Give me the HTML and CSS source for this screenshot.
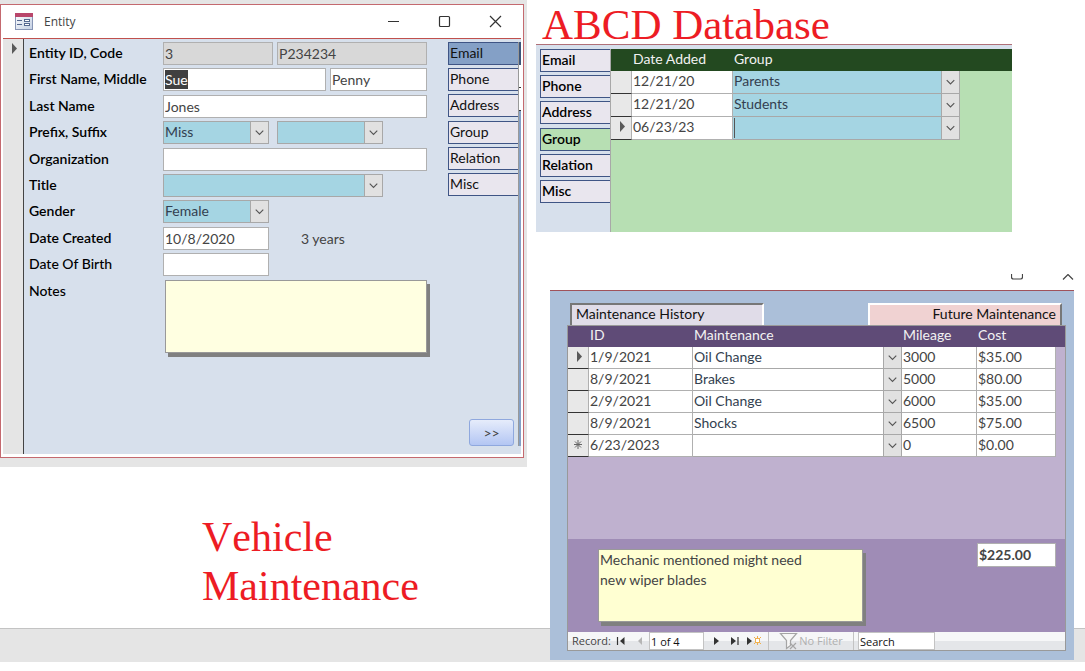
FILE: index.html
```
<!DOCTYPE html>
<html lang="en">
<head>
  <meta charset="UTF-8">
  <meta name="viewport" content="width=device-width, initial-scale=1.0">
  <title>ABCD Database</title>
  <link rel="stylesheet" href="styles.css">
</head>
<body>
  <svg width="0" height="0" class="defs" aria-hidden="true">
    <symbol id="chevron" viewBox="0 0 18 22"><path d="M5 9l4 4 4-4" fill="none" stroke="#555" stroke-width="1.2"/></symbol>
    <symbol id="current" viewBox="0 0 20 21"><path d="M9 4l5 5.500-5 5.500z" fill="#5a5a5a"/></symbol>
  </svg>

  <div class="page">
    <div class="strip"></div>

    <div class="left">
      <div class="workspace">
        <div class="window">
          <div class="titlebar">
            <svg width="18" height="17" viewBox="0 0 18 17" aria-hidden="true">
              <defs>
                <linearGradient id="sheet" x1="0" y1="0" x2="1" y2="1"><stop offset="0" stop-color="#fff"/><stop offset="1" stop-color="#c3cfe3"/></linearGradient>
              </defs>
              <rect x="0.500" y="0.500" width="17" height="16" fill="url(#sheet)" stroke="#8795b5"/>
              <rect x="0" y="0" width="18" height="4" fill="#b9466b"/>
              <path d="M2 7.500h5M2 11.500h5" stroke="#55688f"/>
              <rect x="9.500" y="6.500" width="5" height="2" fill="#fff" stroke="#55688f"/>
              <rect x="9.500" y="10.500" width="5" height="2" fill="#fff" stroke="#55688f"/>
            </svg>
            <span class="title">Entity</span>
            <button class="win-btn" aria-label="Minimize"><svg width="13" height="13"><path d="M1 6.500h11" stroke="#333"/></svg></button>
            <button class="win-btn" aria-label="Maximize"><svg width="13" height="13"><rect x="1.500" y="1.500" width="10" height="10" rx="1" fill="none" stroke="#333" stroke-width="1.200"/></svg></button>
            <button class="win-btn" aria-label="Close"><svg width="13" height="13"><path d="M1 1l11 11M12 1L1 12" stroke="#333" stroke-width="1.200"/></svg></button>
          </div>

          <div class="form-body">
            <div class="selector"><svg width="20" height="21"><use href="#current"/></svg></div>
            <form class="entity">
              <div class="fields">
                <div class="rows">
                  <div class="row">
                    <label for="entityId">Entity ID, Code</label>
                    <input class="box locked w-id" id="entityId" value="3" readonly>
                    <input class="box locked grow" value="P234234" aria-label="Code" readonly>
                  </div>
                  <div class="row">
                    <label for="firstName">First Name, Middle</label>
                    <div class="box w-first" id="firstName" role="textbox" contenteditable="true"><mark>Sue</mark></div>
                    <input class="box grow" value="Penny" aria-label="Middle">
                  </div>
                  <div class="row">
                    <label for="lastName">Last Name</label>
                    <input class="box grow" id="lastName" value="Jones">
                  </div>
                  <div class="row">
                    <label for="prefix">Prefix, Suffix</label>
                    <span class="combo w-short"><select id="prefix"><option>Miss</option></select><svg><use href="#chevron"/></svg></span>
                    <span class="combo w-short suffix"><select aria-label="Suffix"><option></option></select><svg><use href="#chevron"/></svg></span>
                  </div>
                  <div class="row">
                    <label for="org">Organization</label>
                    <input class="box grow" id="org">
                  </div>
                  <div class="row">
                    <label for="jobTitle">Title</label>
                    <span class="combo w-title"><select id="jobTitle"><option></option></select><svg><use href="#chevron"/></svg></span>
                  </div>
                  <div class="row">
                    <label for="gender">Gender</label>
                    <span class="combo w-short"><select id="gender"><option>Female</option></select><svg><use href="#chevron"/></svg></span>
                  </div>
                  <div class="row">
                    <label for="created">Date Created</label>
                    <input class="box w-short" id="created" value="10/8/2020">
                    <span class="age">3 years</span>
                  </div>
                  <div class="row">
                    <label for="birth" class="light">Date Of Birth</label>
                    <input class="box w-short" id="birth">
                  </div>
                </div>
                <div class="row notes-row">
                  <label for="notes" class="light">Notes</label>
                  <textarea class="note" id="notes"></textarea>
                </div>
              </div>

              <div class="side">
                <div class="tabs">
                  <button type="button" class="tab active">Email</button>
                  <button type="button" class="tab">Phone</button>
                  <button type="button" class="tab">Address</button>
                  <button type="button" class="tab">Group</button>
                  <button type="button" class="tab">Relation</button>
                  <button type="button" class="tab">Misc</button>
                </div>
                <button type="button" class="more">&gt;&gt;</button>
              </div>
              <div class="peek"><i class="peek-head"></i><i class="peek-rows"></i></div>
            </form>
          </div>
        </div>
      </div>

      <h2>Vehicle<br>Maintenance</h2>
    </div>

    <div class="right">
      <h1>ABCD Database</h1>

      <section class="groups">
        <div class="tabs bold">
          <button class="tab">Email</button>
          <button class="tab">Phone</button>
          <button class="tab">Address</button>
          <button class="tab current">Group</button>
          <button class="tab">Relation</button>
          <button class="tab">Misc</button>
        </div>
        <div class="group-sheet">
          <div class="green-head">
            <table class="sheet group-table">
              <colgroup><col class="c-sel"><col class="c-date"><col></colgroup>
              <thead>
                <tr><th></th><th>Date Added</th><th>Group</th></tr>
              </thead>
              <tbody>
                <tr><td class="sel"></td><td>12/21/20</td><td class="pick"><span class="combo"><select aria-label="Group"><option>Parents</option></select><svg><use href="#chevron"/></svg></span></td></tr>
                <tr><td class="sel"></td><td>12/21/20</td><td class="pick"><span class="combo"><select aria-label="Group"><option>Students</option></select><svg><use href="#chevron"/></svg></span></td></tr>
                <tr><td class="sel"><svg width="20" height="21"><use href="#current"/></svg></td><td>06/23/23</td><td class="pick"><span class="combo caret"><select aria-label="Group"><option></option></select><svg><use href="#chevron"/></svg></span></td></tr>
              </tbody>
            </table>
          </div>
        </div>
      </section>

      <section class="vehicle">
        <div class="cut-bar">
          <svg width="12" height="6" aria-hidden="true"><path d="M0.500 0v3q0 2 2 2h7q2 0 2-2V0" fill="none" stroke="#444" stroke-width="1.200"/></svg>
          <svg width="12" height="6" aria-hidden="true"><path d="M1 5.500L6 0.500l5 5" fill="none" stroke="#444" stroke-width="1.200"/></svg>
        </div>
        <div class="vehicle-body">
          <div class="big-tabs">
            <button class="big-tab history">Maintenance History</button>
            <button class="big-tab future">Future Maintenance</button>
          </div>
          <div class="subform">
            <div class="purple-head">
              <table class="sheet service-table">
                <colgroup><col class="c-sel"><col class="c-id"><col><col class="c-miles"><col class="c-cost"></colgroup>
                <thead>
                  <tr><th></th><th>ID</th><th>Maintenance</th><th>Mileage</th><th>Cost</th></tr>
                </thead>
                <tbody>
                  <tr><td class="sel"><svg width="20" height="21"><use href="#current"/></svg></td><td>1/9/2021</td><td class="pick"><span class="combo plain"><select aria-label="Maintenance"><option>Oil Change</option></select><svg><use href="#chevron"/></svg></span></td><td>3000</td><td>$35.00</td></tr>
                  <tr><td class="sel"></td><td>8/9/2021</td><td class="pick"><span class="combo plain"><select aria-label="Maintenance"><option>Brakes</option></select><svg><use href="#chevron"/></svg></span></td><td>5000</td><td>$80.00</td></tr>
                  <tr><td class="sel"></td><td>2/9/2021</td><td class="pick"><span class="combo plain"><select aria-label="Maintenance"><option>Oil Change</option></select><svg><use href="#chevron"/></svg></span></td><td>6000</td><td>$35.00</td></tr>
                  <tr><td class="sel"></td><td>8/9/2021</td><td class="pick"><span class="combo plain"><select aria-label="Maintenance"><option>Shocks</option></select><svg><use href="#chevron"/></svg></span></td><td>6500</td><td>$75.00</td></tr>
                  <tr><td class="sel"><svg width="20" height="21"><path d="M10 5v9M6 9.500h8M7 6.500l6 6M13 6.500l-6 6" stroke="#666"/></svg></td><td>6/23/2023</td><td class="pick"><span class="combo plain"><select aria-label="Maintenance"><option></option></select><svg><use href="#chevron"/></svg></span></td><td>0</td><td>$0.00</td></tr>
                </tbody>
              </table>
            </div>
            <div class="sub-footer">
              <textarea class="note remark" aria-label="Remarks">Mechanic mentioned might need
new wiper blades</textarea>
              <input class="box total" value="$225.00" aria-label="Total cost">
            </div>
            <div class="navbar">
              <label for="record">Record:</label>
              <button aria-label="First record"><svg width="10" height="10"><path d="M1.500 1v8" stroke="#333" stroke-width="1.200"/><path d="M8.500 1v8L4 5z" fill="#333"/></svg></button>
              <button aria-label="Previous record"><svg width="10" height="10"><path d="M7 1v8L3 5z" fill="#b5b5b5"/></svg></button>
              <input id="record" class="nav-record" value="1 of 4">
              <button aria-label="Next record"><svg width="10" height="10"><path d="M3 1v8l5-4z" fill="#333"/></svg></button>
              <button aria-label="Last record"><svg width="10" height="10"><path d="M1 1v8l5-4z" fill="#333"/><path d="M8 1v8" stroke="#333" stroke-width="1.200"/></svg></button>
              <button aria-label="New record"><svg width="16" height="10"><path d="M1 1v8l5-4z" fill="#333"/><rect x="9.500" y="2.500" width="4" height="4" fill="#fff" stroke="#f0b04c"/><path d="M8 1l1 1M15 1l-1 1M8 8l1-1M15 8l-1-1M11.500 0v2M11.500 7v2" stroke="#f0b04c"/></svg></button>
              <button class="filter" disabled>
                <svg width="20" height="18"><path d="M1.500 1.500h16l-6 7v5l-4 3v-8z" fill="#f6f6f6" stroke="#a5a5a5" stroke-width="1.200"/><path d="M11 11l6 6M17 11l-6 6" stroke="#a5a5a5" stroke-width="1.200"/></svg>
                No Filter
              </button>
              <input class="nav-search" value="Search" aria-label="Search">
            </div>
          </div>
        </div>
      </section>
    </div>
  </div>
</body>
</html>
```
FILE: styles.css
```
* {
  box-sizing: border-box;
}
body {
  margin: 0;
  background: #fff;
  font: 14px/18px Lato, "Open Sans", sans-serif;
  color: #444;
}
.defs {
  position: absolute;
}
button, input, select, textarea {
  font: inherit;
  color: inherit;
  margin: 0;
  padding: 0;
  border-radius: 0;
  min-width: 0;
}
h1, h2 {
  margin: 0;
  font-family: "Liberation Serif", serif;
  font-weight: normal;
  color: #ed1c24;
}
h1 {
  padding: 6px 0 0 6px;
  font-size: 43px;
  line-height: 38px;
}
h2 {
  padding: 46px 0 0 202px;
  font-size: 42px;
  line-height: 49px;
  font-kerning: none;
}

.page {
  display: grid;
  grid-template-columns: minmax(0, 527fr) minmax(0, 558fr);
  margin-bottom: 9px;
}
.strip {
  grid-area: 1 / 1 / 2 / 3;
  align-self: end;
  height: 34px;
  background: #e5e5e5;
  border-top: 1px solid #c3c3c3;
}
.left {
  grid-area: 1 / 1;
}
.right {
  grid-area: 1 / 2;
  padding: 0 0 2px 9px;
}

/* entity window */
.workspace {
  background: #e5e5e5;
  padding: 4px 3px 9px 0;
}
.window {
  background: #fff;
  border: 1px solid #c4696f;
  padding: 0 2px 3px;
}
.titlebar {
  display: flex;
  align-items: center;
  height: 34px;
  padding-left: 12px;
  border-bottom: 1px solid #c0504d;
}
.title {
  flex: 1;
  margin-left: 11px;
  font-family: "Open Sans", sans-serif;
  font-size: 12px;
}
.win-btn {
  width: 51px;
  height: 30px;
  border: 0;
  background: none;
  display: flex;
  align-items: center;
  justify-content: center;
}
.form-body {
  display: flex;
  min-height: 415px;
}
.selector {
  flex: none;
  width: 21px;
  background: #e5e5e5;
  border-right: 1px solid #444;
}
.entity {
  flex: 1;
  min-width: 0;
  display: flex;
  background: #d7e0ec;
  padding: 3px 0 8px 5px;
}
.fields {
  flex: 1;
  min-width: 0;
}
.rows {
  display: flex;
  flex-direction: column;
  justify-content: space-between;
  min-height: 234px;
}
.row {
  display: flex;
  gap: 4px;
}
.row label {
  flex: none;
  width: 130px;
  line-height: 21px;
  font-weight: 600;
  color: #000;
}
.row label.light {
  font-weight: 500;
}
.notes-row {
  margin-top: 4px;
}
.box {
  height: 23px;
  border: 1px solid #b0b0b0;
  background: #fff;
  padding: 0 1px;
  line-height: 21px;
}
.box mark {
  display: inline-block;
  line-height: 19px;
  background: #404040;
  color: #fff;
}
.locked {
  background: #d8d8d8;
}
.grow {
  flex: 1;
}
.w-id {
  width: 110px;
}
.w-first {
  width: 163px;
}
.w-short {
  width: 106px;
}
.w-title {
  width: 220px;
}
.suffix {
  margin-left: 4px;
}
.age {
  margin-left: 28px;
  line-height: 23px;
}

.combo {
  display: grid;
  grid-template: 100% / 1fr 18px;
  height: 23px;
  border: 1px solid #a8a8a8;
  background: #a5d5e3;
  color: #333f50;
}
.combo select {
  grid-area: 1 / 1 / 2 / 3;
  appearance: none;
  border: 0;
  background: none;
  padding: 0 0 2px 1px;
}
.combo svg {
  grid-area: 1 / 2;
  width: 18px;
  height: 100%;
  background: #e1e1e1;
  border-left: 1px solid #a8a8a8;
  pointer-events: none;
}
.combo.plain {
  background: #fff;
}
.caret select {
  border-left: 1px solid #555;
  margin: 1px 0 1px 1px;
}

.note {
  display: block;
  width: 262px;
  height: 73px;
  margin-left: 2px;
  padding: 0 1px;
  border: 1px solid #999;
  background: #ffffe1;
  box-shadow: 3px 4px 0 #808080;
  resize: none;
  line-height: 20px;
  overflow: hidden;
}

.side {
  flex: none;
  width: 70px;
  margin-left: 21px;
  display: flex;
  flex-direction: column;
  justify-content: space-between;
}
.tabs {
  display: flex;
  flex-direction: column;
  justify-content: space-between;
  min-height: 154px;
}
.tab {
  height: 23px;
  border: 1px solid #3f5585;
  border-right: 0;
  background: #e9e6ee;
  color: #111;
  text-align: left;
  padding: 0 0 1px 1px;
  line-height: 20px;
}
.tab.active {
  background: #84a0c6;
}
.tab.current {
  background: #b7dfb3;
}
.more {
  align-self: end;
  width: 45px;
  height: 27px;
  margin-right: 4px;
  border: 1px solid #8fa8de;
  border-radius: 3px;
  background: linear-gradient(#e6ecfb, #b3c6f3);
}
.peek {
  flex: none;
  width: 3px;
  background: #84a0c6;
  border-left: 1px solid #999;
}
.peek i {
  display: block;
}
.peek-head {
  height: 23px;
  background: #3d5579;
}
.peek-rows {
  height: 46px;
  background: linear-gradient(#fff 22px, #333 22px, #333 23px, #fff 23px, #fff 45px, #333 45px);
}

/* datasheets */
.sheet {
  width: 100%;
  table-layout: fixed;
  border-collapse: separate;
  border-spacing: 0;
}
.sheet th {
  height: 21px;
  padding: 0 1px;
  color: #f2f2f2;
  font-weight: normal;
  text-align: left;
  line-height: 18px;
  vertical-align: top;
}
.sheet td {
  height: 22px;
  padding: 0 0 0 1px;
  border-right: 1px solid #b0b0b0;
  border-bottom: 1px solid #b0b0b0;
  background: #fff;
  line-height: 20px;
  vertical-align: top;
}
.sheet td.sel {
  padding: 0;
  background: #e8e8e8;
  border-bottom-color: #333;
}
.sheet svg {
  display: block;
}
.sheet td.pick {
  padding: 0;
  border: 0;
}
.sheet .combo {
  height: 22px;
  border-width: 0 1px 1px 0;
}
.c-sel {
  width: 21px;
}
.c-date {
  width: 101px;
}
.c-id {
  width: 104px;
}
.c-miles {
  width: 75px;
}
.c-cost {
  width: 79px;
}

.groups {
  display: flex;
  margin-right: 73px;
  min-height: 188px;
  background: #d7e0ec;
  border-top: 1px solid #b07078;
  padding-left: 4px;
}
.groups .tabs {
  width: 70px;
  align-self: start;
  margin-top: 4px;
}
.bold .tab {
  font-weight: 600;
  color: #000;
}
.group-sheet {
  flex: 1;
  margin-top: 4px;
  background: #b7dfb3;
  border-left: 1px solid #a8a8a8;
}
.green-head {
  background: linear-gradient(#234920 22px, #b7dfb3 22px);
  padding-right: 52px;
}
.group-table th {
  height: 22px;
  line-height: 20px;
}
.group-table td, .group-table .combo {
  height: 23px;
}

.vehicle {
  margin: 40px 11px 0 14px;
}
.cut-bar {
  display: flex;
  justify-content: flex-end;
  gap: 39px;
  height: 18px;
  padding: 2px 0 0;
}
.vehicle-body {
  background: #abbfd9;
  border-top: 1px solid #a0525a;
  padding: 12px 8px 9px 17px;
}
.big-tabs {
  display: flex;
  justify-content: space-between;
  padding: 0 4px 0 3px;
}
.big-tab {
  width: 194px;
  height: 22px;
  border: 2px solid #fff;
  border-bottom: 0;
  color: #111;
  line-height: 18px;
  padding-bottom: 2px;
}
.history {
  background: #e0dce8;
  border-color: #777 #fff #777 #777;
  padding-left: 4px;
  text-align: left;
}
.future {
  background: #f0d2d2;
  border-right-color: #777;
  padding-right: 4px;
  text-align: right;
}
.subform {
  border: 1px solid #999;
  background: #bfb1cf;
}
.purple-head {
  min-height: 213px;
  padding-right: 9px;
  background: linear-gradient(#5f4b77 21px, #bfb1cf 21px);
}
.sub-footer {
  display: flex;
  justify-content: space-between;
  align-items: start;
  height: 93px;
  padding: 4px 9px 0 28px;
  background: #9f8cb6;
}
.remark {
  margin: 6px 0 0 2px;
  width: 265px;
  background: #ffffd2;
}
.total {
  width: 79px;
  height: 24px;
  padding-bottom: 2px;
  font-weight: 700;
}
.navbar {
  display: flex;
  align-items: center;
  height: 18px;
  padding-left: 4px;
  font-family: "Open Sans", sans-serif;
  font-size: 11px;
  line-height: 16px;
  background: linear-gradient(#f6f7f8 50%, #e4e6e9 50%);
}
.navbar button {
  width: 19px;
  height: 18px;
  border: 0;
  background: none;
  display: flex;
  align-items: center;
  justify-content: center;
}
.navbar input {
  height: 18px;
  border: 1px solid #c3c3c3;
  background: #fff;
  color: #111;
  padding: 0 1px;
}
.navbar label {
  width: 39px;
}
.nav-record {
  width: 55px;
  margin-right: 2px;
}
.navbar .filter {
  width: 86px;
  margin: 0 4px 0 5px;
  border: solid #c3c3c3;
  border-width: 0 1px;
  color: #b0b0b0;
}
.nav-search {
  width: 77px;
}
```
